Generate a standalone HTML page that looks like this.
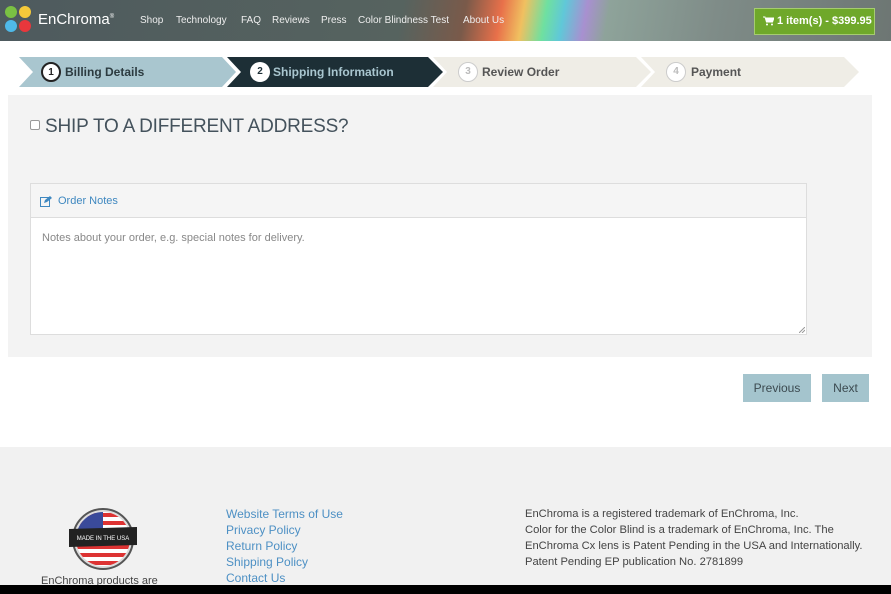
<!DOCTYPE html>
<html><head><meta charset="utf-8"><style>
*{margin:0;padding:0;box-sizing:border-box}
body{width:891px;height:594px;overflow:hidden;background:#fff;font-family:"Liberation Sans",sans-serif;position:relative}
.hdr{position:absolute;left:0;top:0;width:891px;height:41px;background:linear-gradient(100deg,#4e5a5e 0%,#56635f 45%,#7a5a4a 52%,#e8704a 56%,#f0c060 58.5%,#6fe0a0 61%,#60c8d8 63%,#a890d0 65.5%,#8ea39a 68%,#7f8c88 80%,#6d7673 100%)}
.nav{position:absolute;top:15px;font-size:10px;color:#eee}
.logo{position:absolute;left:38px;top:11px;color:#fff;font-size:15px}
.dot{position:absolute;width:12px;height:12px;border-radius:50%}
.cart{position:absolute;left:754px;top:8px;width:121px;height:27px;background:#6fa82a;border:1px solid #a5cc70;color:#fff;font-size:11px;font-weight:bold;line-height:25px;padding-left:22px}
.st{position:absolute;top:65px;font-size:12px;font-weight:bold}
.num{position:absolute;top:62px;width:20px;height:20px;border-radius:50%;font-size:10px;text-align:center;line-height:17px;font-weight:bold}
.panel{position:absolute;left:8px;top:95px;width:864px;height:262px;background:#f3f3f3}
.btn{position:absolute;top:374px;height:28px;background:#a4c4cd;color:#3c4a50;font-size:12px;text-align:center;line-height:28px}
.foot{position:absolute;left:0;top:447px;width:891px;height:138px;background:#f1f1f1}
.lnk{position:absolute;left:226px;font-size:12px;color:#4d90c4}
.tm{position:absolute;left:525px;font-size:11.2px;color:#444;line-height:16px}
</style></head><body>
<div class="hdr"></div>
<div class="dot" style="left:5px;top:6px;background:#7ac143"></div>
<div class="dot" style="left:19px;top:6px;background:#f4c93a"></div>
<div class="dot" style="left:5px;top:20px;background:#4fb9e8"></div>
<div class="dot" style="left:19px;top:20px;background:#e8373c"></div>
<div class="logo">EnChroma<sup style="font-size:6px">®</sup></div>
<div class="nav" style="left:140px">Shop</div>
<div class="nav" style="left:176px">Technology</div>
<div class="nav" style="left:241px">FAQ</div>
<div class="nav" style="left:272px">Reviews</div>
<div class="nav" style="left:321px">Press</div>
<div class="nav" style="left:358px">Color Blindness Test</div>
<div class="nav" style="left:463px">About Us</div>
<div class="cart"><svg style="position:absolute;left:8px;top:7px" width="11" height="10" viewBox="0 0 11 10"><path d="M0 1h2l1.5 5h6l1.5-4H3" fill="#fff" stroke="#fff"/><circle cx="4" cy="8.5" r="1" fill="#fff"/><circle cx="9" cy="8.5" r="1" fill="#fff"/></svg>1 item(s) - $399.95</div>

<svg style="position:absolute;left:0;top:57px" width="891" height="30">
<polygon points="19,0 222,0 236,15 222,30 19,30 33,15" fill="#a9c6cf"/>
<polygon points="227,0 428,0 443,15 428,30 227,30 241,15" fill="#1d2f36"/>
<polygon points="433,0 636,0 651,15 636,30 433,30 447,15" fill="#efede6"/>
<polygon points="641,0 844,0 859,15 844,30 641,30 655,15" fill="#efede6"/>
</svg>
<div class="num" style="left:41px;background:#fff;border:2px solid #222;color:#222">1</div>
<div class="st" style="left:65px;color:#2c3b40">Billing Details</div>
<div class="num" style="left:250px;background:#fff;color:#1d2f36;line-height:20px">2</div>
<div class="st" style="left:273px;color:#a9c6cf">Shipping Information</div>
<div class="num" style="left:458px;background:#fff;border:1px solid #ccc;color:#bbb">3</div>
<div class="st" style="left:482px;color:#555">Review Order</div>
<div class="num" style="left:666px;background:#fff;border:1px solid #ccc;color:#bbb">4</div>
<div class="st" style="left:691px;color:#555">Payment</div>

<div class="panel"></div>
<div style="position:absolute;left:30px;top:120px;width:10px;height:10px;border:1px solid #999;border-radius:2px;background:#fff"></div>
<div style="position:absolute;left:45px;top:116px;font-size:19px;color:#44525c;letter-spacing:-0.2px">SHIP TO A DIFFERENT ADDRESS?</div>
<div style="position:absolute;left:30px;top:183px;width:777px;height:152px;border:1px solid #ddd;background:#fff">
<div style="height:34px;background:#f5f5f5;border-bottom:1px solid #ddd;font-size:11px;color:#3f88c0;line-height:34px;padding-left:27px;position:relative">
<svg style="position:absolute;left:9px;top:12px" width="12" height="11" viewBox="0 0 12 11"><rect x="0.5" y="1.5" width="9" height="9" fill="none" stroke="#3f88c0"/><path d="M4 7l1-3 5-4 2 2-5 4z" fill="#3f88c0"/></svg>Order Notes</div>
<div style="padding:14px 11px;font-size:11px;color:#888">Notes about your order, e.g. special notes for delivery.</div>
<svg style="position:absolute;right:1px;bottom:1px" width="6" height="6"><path d="M0 6L6 0M3 6L6 3" stroke="#999"/></svg>
</div>
<div class="btn" style="left:743px;width:68px">Previous</div>
<div class="btn" style="left:822px;width:47px">Next</div>

<div class="foot"></div>
<svg style="position:absolute;left:69px;top:507px" width="68" height="64" viewBox="0 0 68 64">
<circle cx="34" cy="32" r="30" fill="#ddd" stroke="#555" stroke-width="2"/>
<clipPath id="c"><circle cx="34" cy="32" r="27"/></clipPath>
<g clip-path="url(#c)"><rect x="0" y="0" width="68" height="64" fill="#fff"/>
<rect x="0" y="6" width="68" height="4" fill="#d33"/><rect x="0" y="14" width="68" height="4" fill="#d33"/><rect x="0" y="38" width="68" height="4" fill="#d33"/><rect x="0" y="46" width="68" height="4" fill="#d33"/><rect x="0" y="54" width="68" height="4" fill="#d33"/>
<rect x="0" y="0" width="34" height="22" fill="#3a4a9a"/></g>
<polygon points="0,22 68,20 68,38 0,40" fill="#222"/>
<text x="34" y="33" font-size="6" fill="#fff" text-anchor="middle" font-family="Liberation Sans">MADE IN THE USA</text>
</svg>
<div style="position:absolute;left:41px;top:575px;font-size:11px;color:#444">EnChroma products are</div>
<div class="lnk" style="top:507px">Website Terms of Use</div>
<div class="lnk" style="top:523px">Privacy Policy</div>
<div class="lnk" style="top:539px">Return Policy</div>
<div class="lnk" style="top:555px">Shipping Policy</div>
<div class="lnk" style="top:571px">Contact Us</div>
<div class="tm" style="top:506px">EnChroma is a registered trademark of EnChroma, Inc.<br>Color for the Color Blind is a trademark of EnChroma, Inc. The<br>EnChroma Cx lens is Patent Pending in the USA and Internationally.<br>Patent Pending EP publication No. 2781899</div>
<div style="position:absolute;left:0;top:585px;width:891px;height:9px;background:#000"></div>
</body></html>
